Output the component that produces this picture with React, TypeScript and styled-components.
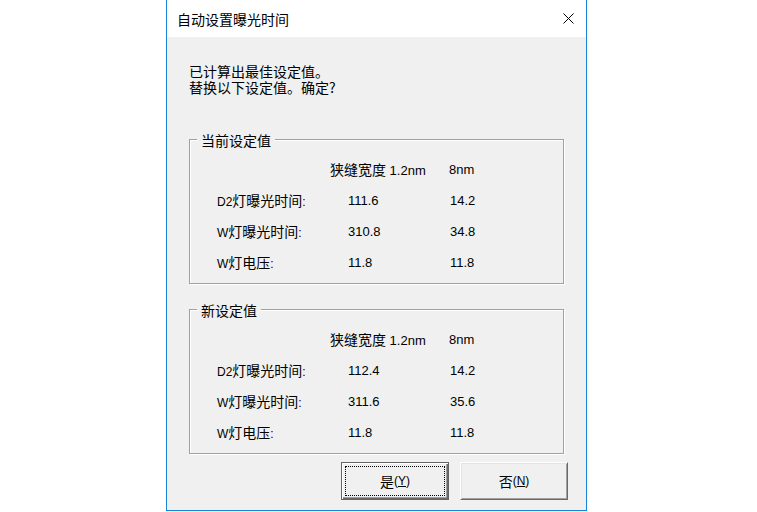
import React from "react";
import styled, { createGlobalStyle } from "styled-components";

const Global = createGlobalStyle`
  html, body { margin: 0; padding: 0; background: #ffffff; }
  body {
    font-family: "Liberation Sans", "Noto Sans CJK SC", sans-serif;
    font-size: 12px;
    color: #000;
  }
`;

const Desktop = styled.div`
  width: 757px;
  height: 512px;
  background: #ffffff;
  display: flex;
  align-items: flex-start;
  overflow: hidden;
`;

const Window = styled.div`
  margin-left: 166px;
  width: 421px;
  height: 511px;
  box-sizing: border-box;
  border: 1px solid #1883d7;
  border-top: none;
  background: #f0f0f0;
  display: flex;
  flex-direction: column;
`;

const TitleBar = styled.div`
  height: 37px;
  flex: none;
  background: #ffffff;
  display: flex;
  align-items: center;
  padding-left: 10px;
`;

const Title = styled.div`
  flex: 1;
  font-family: "Noto Sans CJK SC", sans-serif;
  font-size: 14px;
  line-height: 16px;
`;

const CloseBox = styled.div`
  width: 30px;
  height: 30px;
  margin-right: 3px;
  display: flex;
  align-items: center;
  justify-content: center;
`;

const Body = styled.div`
  flex: 1;
  display: flex;
  flex-direction: column;
  padding: 26px 22px 0 22px;
`;

const Message = styled.div`
  font-family: "Noto Sans CJK SC", sans-serif;
  font-size: 14px;
  line-height: 16px;
  height: 32px;
`;

const Group = styled.div<{ $gap: number }>`
  position: relative;
  margin-top: ${(p) => p.$gap}px;
  height: 145px;
  box-sizing: border-box;
  border: 1px solid #a0a0a0;
  box-shadow: 1px 1px 0 #ffffff, inset 1px 1px 0 #ffffff;
  padding: 14px 0 0 27px;
`;

const Legend = styled.div`
  position: absolute;
  top: -8px;
  left: 7px;
  padding: 0 4px;
  background: #f0f0f0;
  font-family: "Noto Sans CJK SC", sans-serif;
  font-size: 14px;
  line-height: 16px;
`;

const Grid = styled.div`
  display: grid;
  grid-template-columns: 113px 119px 1fr;
  grid-auto-rows: 31px;
  align-items: center;
`;

const Cell = styled.div<{ $indent?: number; $size?: number }>`
  padding-left: ${(p) => p.$indent ?? 0}px;
  font-size: ${(p) => p.$size ?? 13}px;
  line-height: 16px;
  white-space: nowrap;
`;

const Han = styled.span`
  font-family: "Noto Sans CJK SC", sans-serif;
  font-size: 14px;
`;

const ButtonRow = styled.div`
  margin-top: 8px;
  margin-right: -4px;
  display: flex;
  justify-content: flex-end;
  gap: 11px;
`;

const Button = styled.button<{ $default?: boolean }>`
  position: relative;
  width: 108px;
  height: 38px;
  box-sizing: border-box;
  margin: 0;
  padding: 0;
  background: #f0f0f0;
  font-family: "Liberation Sans", "Noto Sans CJK SC", sans-serif;
  font-size: 12px;
  color: #000;
  display: flex;
  align-items: center;
  justify-content: center;
  border: 1px solid;
  border-color: ${(p) =>
    p.$default ? "#646464" : "#ffffff #696969 #696969 #ffffff"};
  box-shadow: ${(p) =>
    p.$default
      ? "inset 1px 1px 0 #ffffff, inset -1px -1px 0 #696969, inset -2px -2px 0 #a0a0a0"
      : "inset 1px 1px 0 #e3e3e3, inset -1px -1px 0 #a0a0a0"};

  &::after {
    content: "";
    display: ${(p) => (p.$default ? "block" : "none")};
    position: absolute;
    inset: 3px;
    border: 1px dotted #000;
  }
`;

const Mnemonic = styled.span`
  text-decoration: underline;
`;

type Row = { label: React.ReactNode; a: string; b: string };

const rowsCurrent: Row[] = [
  { label: <>D2<Han>灯曝光时间</Han>:</>, a: "111.6", b: "14.2" },
  { label: <>W<Han>灯曝光时间</Han>:</>, a: "310.8", b: "34.8" },
  { label: <>W<Han>灯电压</Han>:</>, a: "11.8", b: "11.8" },
];

const rowsNew: Row[] = [
  { label: <>D2<Han>灯曝光时间</Han>:</>, a: "112.4", b: "14.2" },
  { label: <>W<Han>灯曝光时间</Han>:</>, a: "311.6", b: "35.6" },
  { label: <>W<Han>灯电压</Han>:</>, a: "11.8", b: "11.8" },
];

function SettingsGroup({ title, rows, gap }: { title: string; rows: Row[]; gap: number }) {
  return (
    <Group $gap={gap}>
      <Legend>{title}</Legend>
      <Grid>
        <Cell />
        <Cell>
          <Han>狭缝宽度</Han> 1.2nm
        </Cell>
        <Cell>8nm</Cell>
        {rows.map((r, i) => (
          <React.Fragment key={i}>
            <Cell $size={12}>{r.label}</Cell>
            <Cell $indent={18}>{r.a}</Cell>
            <Cell $indent={1}>{r.b}</Cell>
          </React.Fragment>
        ))}
      </Grid>
    </Group>
  );
}

export default function App() {
  return (
    <>
      <Global />
      <Desktop>
        <Window>
          <TitleBar>
            <Title>自动设置曝光时间</Title>
            <CloseBox>
              <svg width="11" height="11" viewBox="0 0 11 11">
                <path d="M0.5 0.5 L10.5 10.5 M10.5 0.5 L0.5 10.5" stroke="#000" strokeWidth="1" fill="none" />
              </svg>
            </CloseBox>
          </TitleBar>
          <Body>
            <Message>
              已计算出最佳设定值。
              <br />
              替换以下设定值。确定?
            </Message>
            <SettingsGroup title="当前设定值" rows={rowsCurrent} gap={44} />
            <SettingsGroup title="新设定值" rows={rowsNew} gap={25} />
            <ButtonRow>
              <Button $default>
                <Han>是</Han>(<Mnemonic>Y</Mnemonic>)
              </Button>
              <Button>
                <Han>否</Han>(<Mnemonic>N</Mnemonic>)
              </Button>
            </ButtonRow>
          </Body>
        </Window>
      </Desktop>
    </>
  );
}
